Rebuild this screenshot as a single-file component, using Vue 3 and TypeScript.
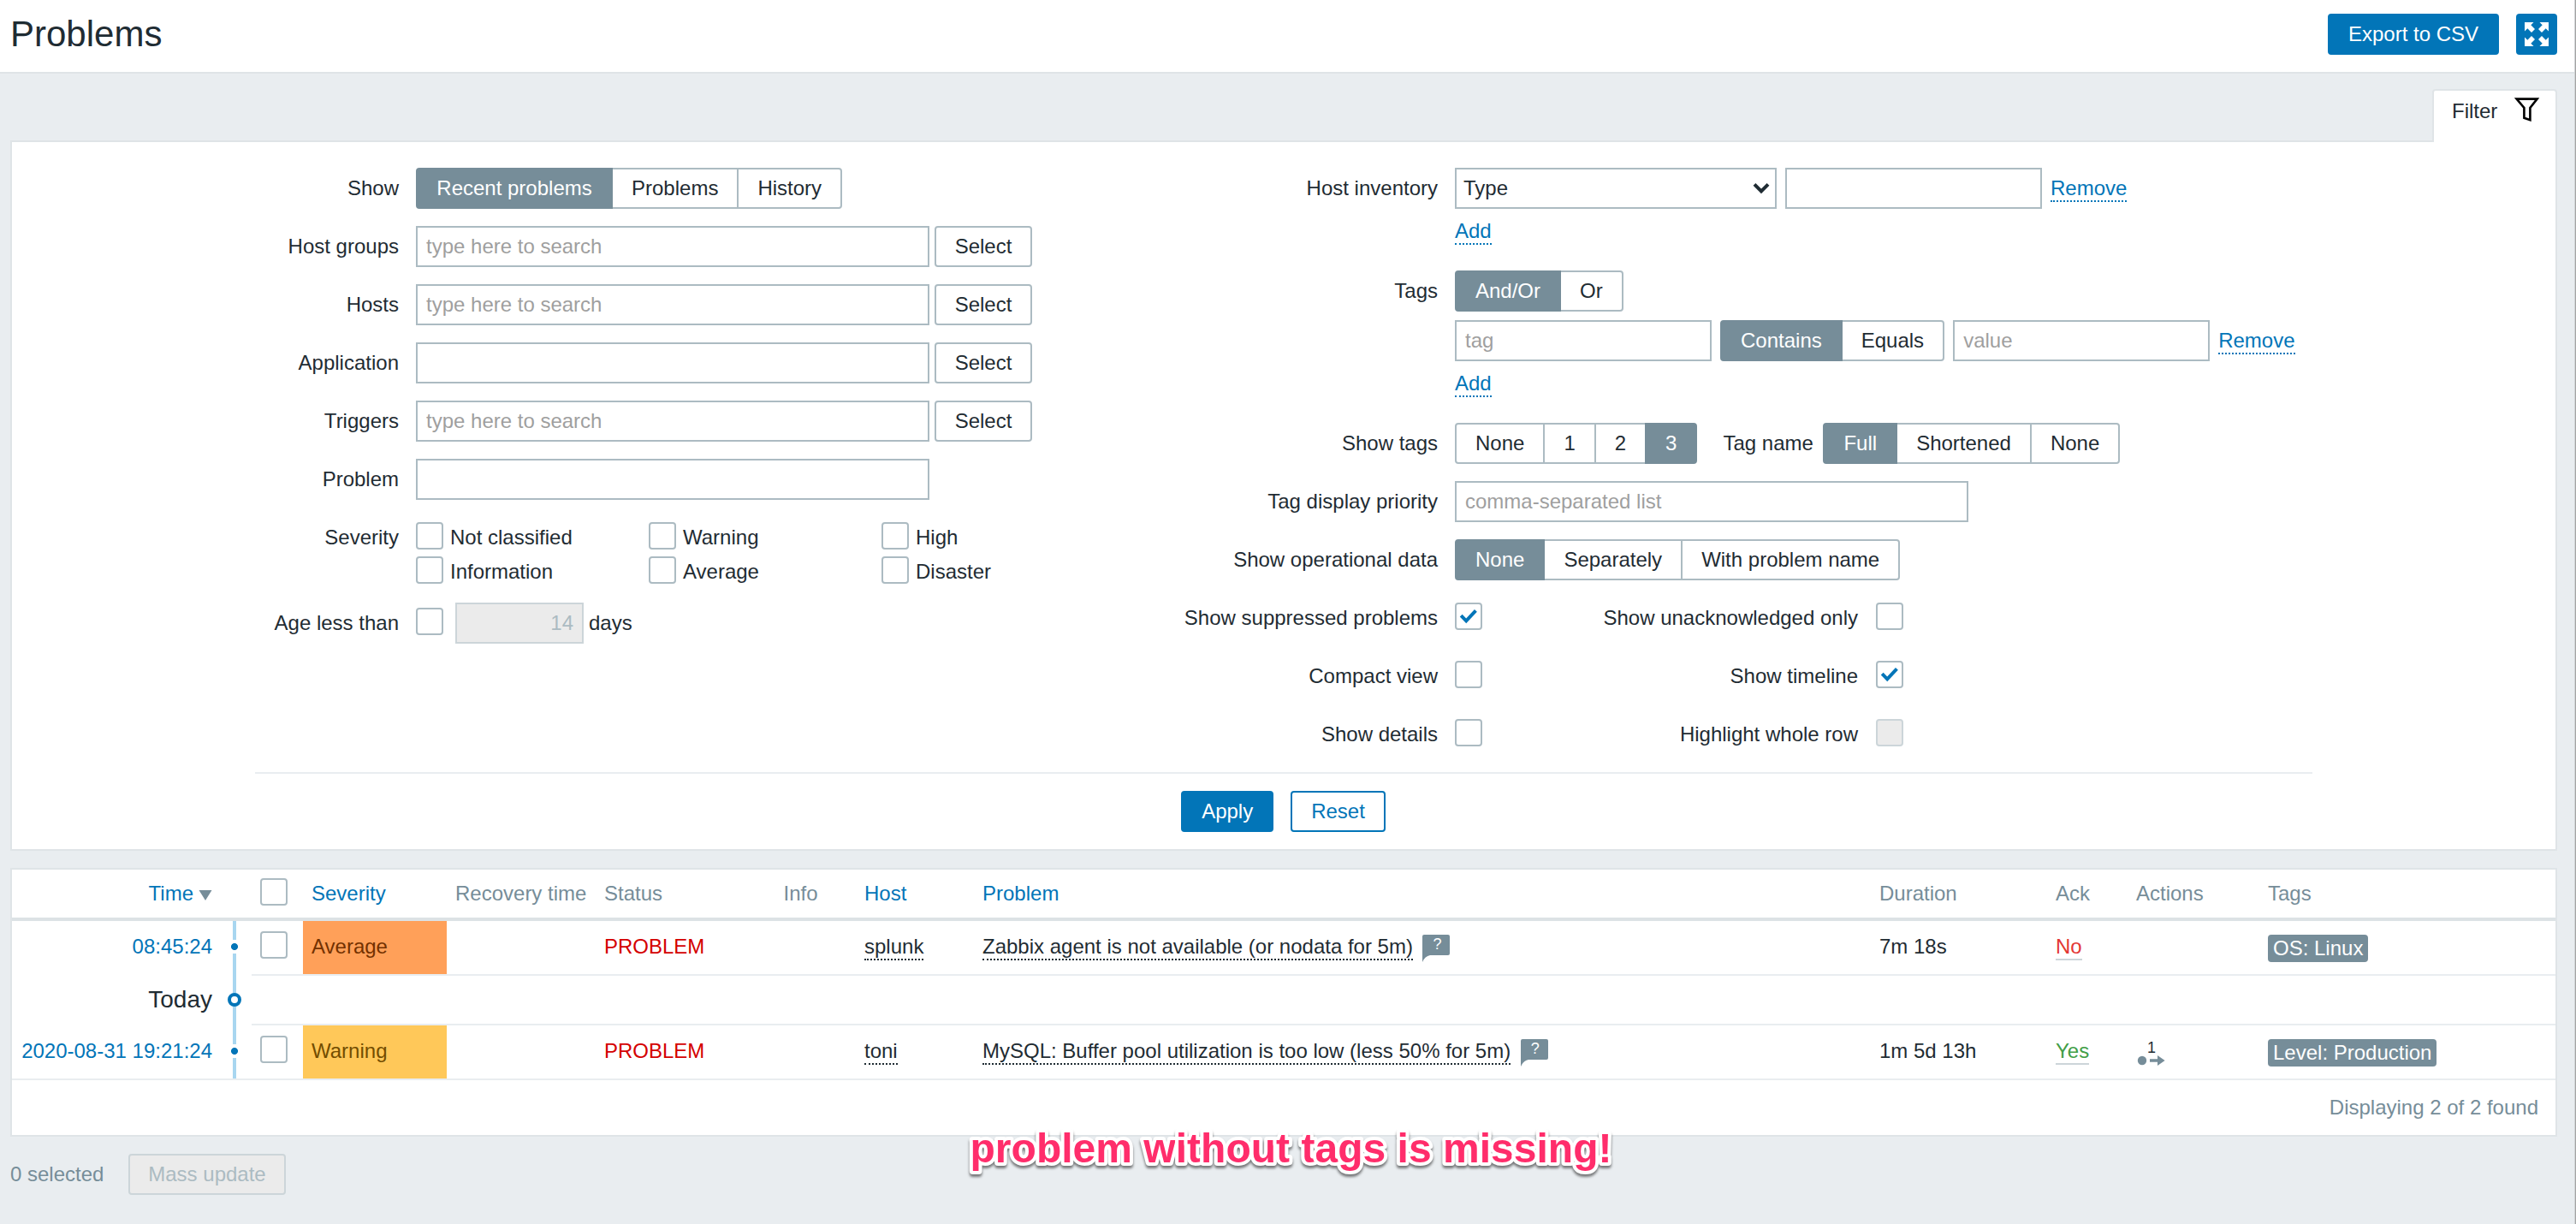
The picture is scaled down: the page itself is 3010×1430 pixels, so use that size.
<script setup lang="ts">
interface PickerField {
  label: string
  placeholder: string
  select: boolean
}

interface Problem {
  time: string
  severity: string
  level: string
  status: string
  host: string
  name: string
  duration: string
  ack: string
  actions: number
  tag: string
}

const pickers: PickerField[] = [
  { label: 'Host groups', placeholder: 'type here to search', select: true },
  { label: 'Hosts', placeholder: 'type here to search', select: true },
  { label: 'Application', placeholder: '', select: true },
  { label: 'Triggers', placeholder: 'type here to search', select: true },
  { label: 'Problem', placeholder: '', select: false },
]

const severities: string[] = ['Not classified', 'Warning', 'High', 'Information', 'Average', 'Disaster']

const toggles = [
  { left: 'Show suppressed problems', leftOn: true, right: 'Show unacknowledged only', rightOn: false, disabled: false },
  { left: 'Compact view', leftOn: false, right: 'Show timeline', rightOn: true, disabled: false },
  { left: 'Show details', leftOn: false, right: 'Highlight whole row', rightOn: false, disabled: true },
]

const first: Problem = {
  time: '08:45:24',
  severity: 'Average',
  level: 'average',
  status: 'PROBLEM',
  host: 'splunk',
  name: 'Zabbix agent is not available (or nodata for 5m)',
  duration: '7m 18s',
  ack: 'No',
  actions: 0,
  tag: 'OS: Linux',
}

const second: Problem = {
  time: '2020-08-31 19:21:24',
  severity: 'Warning',
  level: 'warning',
  status: 'PROBLEM',
  host: 'toni',
  name: 'MySQL: Buffer pool utilization is too low (less 50% for 5m)',
  duration: '1m 5d 13h',
  ack: 'Yes',
  actions: 1,
  tag: 'Level: Production',
}

const rows: (Problem | null)[] = [first, null, second]
</script>

<template>
  <div class="page">
    <header class="header">
      <h1>Problems</h1>
      <div class="header-actions">
        <button class="btn primary">Export to CSV</button>
        <button class="btn-full" aria-label="Kiosk mode">
          <svg width="28" height="28" viewBox="0 0 28 28" fill="#fff">
            <path d="M0 0H10.5L7.3 3.3L12 8L8 12L3.3 7.3L0 10.5Z" />
            <path d="M28 0H17.5L20.7 3.3L16 8L20 12L24.7 7.3L28 10.5Z" />
            <path d="M0 28H10.5L7.3 24.7L12 20L8 16L3.3 20.7L0 17.5Z" />
            <path d="M28 28H17.5L20.7 24.7L16 20L20 16L24.7 20.7L28 17.5Z" />
          </svg>
        </button>
      </div>
    </header>

    <main class="content">
      <div class="tab">
        <span>Filter</span>
        <svg width="30" height="29" viewBox="0 0 30 29" fill="none" stroke="#000" stroke-width="2.6">
          <path d="M2.6 1.6H26.6L18.4 12V26.2L11.4 23.8V12Z" />
        </svg>
      </div>

      <section class="filter">
        <div class="filter-cols">
          <div class="col left">
            <div class="row">
              <div class="label">Show</div>
              <div class="seg roomy">
                <span class="on">Recent problems</span><span>Problems</span><span>History</span>
              </div>
            </div>
            <div v-for="p in pickers" :key="p.label" class="row">
              <div class="label">{{ p.label }}</div>
              <input class="input wide" type="text" :placeholder="p.placeholder" />
              <button v-if="p.select" class="btn grey">Select</button>
            </div>
            <div class="row sev-row">
              <div class="label">Severity</div>
              <div class="sev-grid">
                <div v-for="s in severities" :key="s" class="check-item">
                  <i class="check"></i><span>{{ s }}</span>
                </div>
              </div>
            </div>
            <div class="row">
              <div class="label">Age less than</div>
              <i class="check offset"></i>
              <div class="input days">14</div>
              <span class="days-label">days</span>
            </div>
          </div>

          <div class="col right">
            <div class="row">
              <div class="label">Host inventory</div>
              <div class="stack">
                <div class="line">
                  <div class="input select">
                    <span>Type</span>
                    <svg width="20" height="14" viewBox="0 0 20 14" fill="none" stroke="#1f2c33" stroke-width="4">
                      <path d="M2 2.4L10 10.4L18 2.4" />
                    </svg>
                  </div>
                  <input class="input short" type="text" />
                  <div class="link-box"><a class="link">Remove</a></div>
                </div>
                <div class="add"><a class="link">Add</a></div>
              </div>
            </div>
            <div class="row">
              <div class="label">Tags</div>
              <div class="stack">
                <div class="seg"><span class="on">And/Or</span><span>Or</span></div>
                <div class="line tag-line">
                  <input class="input short" type="text" placeholder="tag" />
                  <div class="seg"><span class="on">Contains</span><span>Equals</span></div>
                  <input class="input short" type="text" placeholder="value" />
                  <div class="link-box"><a class="link">Remove</a></div>
                </div>
                <div class="add"><a class="link">Add</a></div>
              </div>
            </div>
            <div class="row">
              <div class="label">Show tags</div>
              <div class="seg"><span>None</span><span>1</span><span>2</span><span class="on">3</span></div>
              <div class="tag-name">Tag name</div>
              <div class="seg"><span class="on">Full</span><span>Shortened</span><span>None</span></div>
            </div>
            <div class="row">
              <div class="label">Tag display priority</div>
              <input class="input wide" type="text" placeholder="comma-separated list" />
            </div>
            <div class="row">
              <div class="label">Show operational data</div>
              <div class="seg"><span class="on">None</span><span>Separately</span><span>With problem name</span></div>
            </div>
            <div v-for="t in toggles" :key="t.left" class="row">
              <div class="label">{{ t.left }}</div>
              <i class="check offset">
                <svg v-if="t.leftOn" width="22" height="18" viewBox="0 0 22 18" fill="none" stroke="#0275b8" stroke-width="4">
                  <path d="M2.2 8.2L8.2 14.4L19.4 2.4" />
                </svg>
              </i>
              <div class="label second">{{ t.right }}</div>
              <i class="check offset" :class="{ disabled: t.disabled }">
                <svg v-if="t.rightOn" width="22" height="18" viewBox="0 0 22 18" fill="none" stroke="#0275b8" stroke-width="4">
                  <path d="M2.2 8.2L8.2 14.4L19.4 2.4" />
                </svg>
              </i>
            </div>
          </div>
        </div>
        <div class="filter-actions">
          <button class="btn primary">Apply</button>
          <button class="btn outline">Reset</button>
        </div>
      </section>

      <section class="table">
        <div class="grid thead">
          <div class="cell time sort">
            <span>Time</span>
            <svg width="16" height="12" viewBox="0 0 16 12"><path d="M0.5 0H15.5L8 12Z" fill="#768d99" /></svg>
          </div>
          <div></div>
          <div class="cell"><i class="check"></i></div>
          <div class="cell sort">Severity</div>
          <div class="cell">Recovery time</div>
          <div class="cell">Status</div>
          <div class="cell info">Info</div>
          <div class="cell sort">Host</div>
          <div class="cell sort">Problem</div>
          <div class="cell">Duration</div>
          <div class="cell">Ack</div>
          <div class="cell">Actions</div>
          <div class="cell">Tags</div>
        </div>

        <template v-for="(r, i) in rows" :key="i">
          <div v-if="r" class="grid data" :class="{ last: i === rows.length - 1 }">
            <div class="cell time axis-text"><a>{{ r.time }}</a></div>
            <div class="axis"><i class="dot"></i></div>
            <div class="cell"><i class="check"></i></div>
            <div class="cell" :class="r.level">{{ r.severity }}</div>
            <div class="cell"></div>
            <div class="cell red">{{ r.status }}</div>
            <div class="cell"></div>
            <div class="cell"><span class="dotted">{{ r.host }}</span></div>
            <div class="cell">
              <span class="dotted">{{ r.name }}</span>
              <span class="hint">
                <svg width="32" height="32" viewBox="0 0 32 32">
                  <path d="M2 0H30Q32 0 32 2V22Q32 24 30 24H9Q3 25 0 32V2Q0 0 2 0Z" fill="#768d99" />
                </svg>
                <b>?</b>
              </span>
            </div>
            <div class="cell">{{ r.duration }}</div>
            <div class="cell"><span class="ack" :class="r.ack === 'Yes' ? 'yes' : 'no'">{{ r.ack }}</span></div>
            <div class="cell">
              <span v-if="r.actions" class="act">
                <b>{{ r.actions }}</b>
                <svg width="34" height="12" viewBox="0 0 34 12" fill="#768d99">
                  <circle cx="7" cy="6" r="5.2" />
                  <path d="M16 4.2H25V0L33.6 6L25 12V7.8H16Z" />
                </svg>
              </span>
            </div>
            <div class="cell"><span class="tag">{{ r.tag }}</span></div>
          </div>
          <div v-else class="grid today">
            <div class="cell time axis-text">Today</div>
            <div class="axis"><i class="ring"></i></div>
            <div class="rest"></div>
          </div>
        </template>

        <div class="tfoot">Displaying 2 of 2 found</div>
        <svg class="note" width="780" height="72" viewBox="0 0 780 72">
          <text x="13.5" y="48" textLength="750">problem without tags is missing!</text>
        </svg>
      </section>

      <div class="bulk">
        <span>0 selected</span>
        <button class="btn off">Mass update</button>
      </div>
    </main>
  </div>
</template>

<style>
body {
  margin: 0;
  background: #ebeef0;
}
</style>

<style scoped>
.page,
.page * {
  box-sizing: border-box;
}

.page {
  width: 3010px;
  height: 1430px;
  overflow: hidden;
  background: #e9edf0;
  border-right: 1px solid #a3a3a3;
  box-shadow: inset -1px 0 #d2d5d7;
  font-family: 'Liberation Sans', Arial, sans-serif;
  font-size: 24px;
  line-height: 48px;
  color: #1f2c33;
}

.header {
  height: 86px;
  margin-right: 1px;
  padding: 16px 20px 0 12px;
  background: #fff;
  border-bottom: 2px solid #dfe4e7;
  display: flex;
  justify-content: space-between;
}

h1 {
  margin: 0;
  font-size: 42px;
  font-weight: 400;
  line-height: 48px;
}

.header-actions {
  display: flex;
  gap: 20px;
}

.btn {
  height: 48px;
  padding: 0 22px;
  border: 2px solid #acbbc2;
  border-radius: 4px;
  background: #fff;
  font: inherit;
  line-height: 44px;
  color: #1f2c33;
  white-space: nowrap;
}

.btn.primary {
  background: #0275b8;
  border-color: #0275b8;
  color: #fff;
}

.btn.outline {
  border-color: #0275b8;
  color: #0275b8;
}

.btn.off {
  width: 184px;
  padding: 0;
  background: #ebebeb;
  border-color: #ccd5d9;
  color: #acbbc2;
}

.btn.grey {
  width: 114px;
  padding: 0;
  margin-left: 6px;
}

.btn-full {
  width: 48px;
  height: 48px;
  padding: 0;
  border: 0;
  border-radius: 4px;
  background: #0275b8;
  display: flex;
  align-items: center;
  justify-content: center;
}

.content {
  width: 3000px;
  padding: 18px 12px 0;
  display: flex;
  flex-direction: column;
}

.tab {
  align-self: flex-end;
  position: relative;
  z-index: 1;
  width: 146px;
  height: 62px;
  margin-bottom: -2px;
  padding: 0 18px 0 21px;
  background: #fff;
  border: 2px solid #dfe4e7;
  border-bottom: 0;
  border-radius: 4px 4px 0 0;
  display: flex;
  justify-content: space-between;
  align-items: flex-start;
}

.tab svg {
  margin-top: 8px;
}

.filter {
  height: 830px;
  padding: 30px 284px 0;
  background: #fff;
  border: 2px solid #dfe4e7;
}

.filter-cols {
  display: flex;
  padding-bottom: 20px;
  border-bottom: 2px solid #e9edf0;
}

.col {
  display: flex;
  flex-direction: column;
  gap: 20px;
}

.col.left {
  width: 1082px;
}

.row {
  display: flex;
  align-items: flex-start;
  min-height: 48px;
}

.label {
  width: 168px;
  margin-right: 20px;
  text-align: right;
  white-space: nowrap;
  flex: none;
}

.right .label {
  width: 300px;
}

.right .label.second {
  width: 439px;
  margin-right: 21px;
}

.input {
  height: 48px;
  margin: 0;
  padding: 0 10px;
  border: 2px solid #acbbc2;
  border-radius: 0;
  background: #fff;
  font: inherit;
  line-height: 44px;
  color: #1f2c33;
  outline: 0;
}

.input::placeholder {
  color: #9f9f9f;
  opacity: 1;
}

.input.wide {
  width: 600px;
}

.input.short {
  width: 300px;
}

.input.select {
  width: 376px;
  padding: 0 6px 0 8px;
  display: flex;
  justify-content: space-between;
  align-items: center;
}

.input.days {
  width: 150px;
  margin-left: 14px;
  background: #ebebeb;
  border-color: #ccd5d9;
  color: #acbbc2;
  text-align: right;
}

.days-label {
  margin-left: 6px;
}

.seg {
  display: flex;
}

.seg span {
  height: 48px;
  padding: 0 22px;
  border: 2px solid #acbbc2;
  background: #fff;
  line-height: 44px;
  white-space: nowrap;
}

.seg.roomy span:first-child {
  padding: 0 22.3px;
}

.seg span + span {
  margin-left: -2px;
}

.seg span:first-child {
  border-radius: 4px 0 0 4px;
}

.seg span:last-child {
  border-radius: 0 4px 4px 0;
}

.seg .on {
  position: relative;
  z-index: 1;
  background: #768d99;
  border-color: #768d99;
  color: #fff;
}

.stack {
  display: flex;
  flex-direction: column;
}

.line {
  display: flex;
  gap: 10px;
}

.tag-line {
  margin-top: 10px;
}

.add {
  height: 52px;
  line-height: 52px;
}

.link {
  color: #0275b8;
  padding-bottom: 1px;
  border-bottom: 2px dotted #0275b8;
}

.tag-name {
  width: 107px;
  margin: 0 10px 0 30px;
  white-space: nowrap;
}

.check {
  flex: none;
  width: 32px;
  height: 32px;
  border: 2px solid #acbbc2;
  border-radius: 4px;
  background: #fff;
  display: flex;
  align-items: center;
  justify-content: center;
}

.check.offset {
  margin-top: 6px;
}

.check.disabled {
  background: #ebebeb;
  border-color: #ccd5d9;
}

.sev-row {
  height: 80px;
}

.sev-grid {
  display: grid;
  grid-template-columns: repeat(3, 272px);
  grid-auto-rows: 32px;
  row-gap: 8px;
  margin-top: 6px;
}

.check-item {
  display: flex;
  align-items: flex-start;
  gap: 8px;
  line-height: 36px;
}

.filter-actions {
  display: flex;
  justify-content: center;
  gap: 20px;
  padding: 20px 1px 0 0;
}

.table {
  position: relative;
  height: 314px;
  margin-top: 20px;
  background: #fff;
  border: 2px solid #dfe4e7;
}

.grid {
  display: grid;
  grid-template-columns: 244px 36px 60px 168px 174px 208px 96px 138px 1048px 206px 94px 154px 346px;
}

.cell {
  display: flex;
  align-items: center;
  padding: 0 10px;
  white-space: nowrap;
}

.thead {
  height: 60px;
  border-bottom: 4px solid #dce2e5;
  color: #768d99;
}

.thead .check {
  margin-top: -4px;
}

.thead .info {
  padding-left: 11.5px;
}

.sort {
  color: #0275b8;
}

.time {
  justify-content: flex-end;
}

.time svg {
  margin: 3px 0 0 6px;
}

.time a {
  color: #0275b8;
}

.data {
  height: 64px;
}

.data .cell {
  height: 64px;
  padding-bottom: 3px;
  border-bottom: 2px solid #e9edf0;
}

.data .axis-text,
.today .axis-text {
  border-bottom: 0;
}

.data .axis-text {
  padding-bottom: 5px;
}

.last {
  border-bottom: 2px solid #e9edf0;
}

.last .cell {
  height: 62px;
  border-bottom: 0;
}

.last .axis-text {
  padding-bottom: 3px;
}

.data .check {
  margin-bottom: 3px;
}

.axis {
  position: relative;
  background: linear-gradient(#a8d6f0, #a8d6f0) 14px 0 / 4px 100% no-repeat;
}

.dot {
  position: absolute;
  left: 8px;
  top: 22px;
  width: 16px;
  height: 16px;
  background: radial-gradient(circle, #0275b8 3.6px, #fff 4.4px);
}

.ring {
  position: absolute;
  left: 8px;
  top: 20px;
  width: 16px;
  height: 16px;
  border: 4px solid #0275b8;
  border-radius: 50%;
  background: #fff;
}

.today {
  height: 58px;
}

.today .axis-text {
  height: 56px;
  font-size: 28px;
}

.rest {
  grid-column: 3 / -1;
  border-bottom: 2px solid #e9edf0;
}

.data .average {
  background: #ffa059;
  background-clip: padding-box;
  color: #733100;
}

.data .warning {
  background: #ffc859;
  color: #734d00;
}

.red {
  color: #d40000;
}

.dotted {
  line-height: 27px;
  height: 30px;
  margin-top: 3px;
  border-bottom: 2px dotted #1f2c33;
}

.hint {
  position: relative;
  width: 32px;
  height: 32px;
  margin: 5px 0 0 11.5px;
}

.hint svg {
  display: block;
}

.hint b {
  position: absolute;
  left: 0;
  top: 0;
  width: 34px;
  text-align: center;
  font-size: 18px;
  font-weight: 400;
  line-height: 23px;
  color: #fff;
}

.ack {
  height: 30px;
  line-height: 27px;
  margin-top: 3px;
  border-bottom: 2px solid #ccd5d9;
}

.no {
  color: #e33734;
}

.yes {
  color: #429e47;
}

.act {
  display: flex;
  flex-direction: column;
  width: 34px;
  margin-top: 5px;
}

.act b {
  font-size: 18px;
  font-weight: 400;
  line-height: 18px;
  padding-left: 13px;
}

.tag {
  height: 32px;
  margin-top: 5px;
  padding: 0 6px;
  border-radius: 4px;
  background: #768d99;
  color: #fff;
  line-height: 31px;
}

.tfoot {
  height: 64px;
  padding-right: 20px;
  line-height: 64px;
  text-align: right;
  color: #768d99;
}

.note {
  position: absolute;
  left: 1106px;
  top: 294px;
  overflow: visible;
  filter: drop-shadow(0 3px 1.5px rgba(0, 0, 0, 0.5));
}

.note text {
  font-size: 48px;
  font-weight: 700;
  fill: #ff2d6b;
  stroke: #fff;
  stroke-width: 8px;
  stroke-linejoin: round;
  paint-order: stroke fill;
}

.bulk {
  display: flex;
  gap: 28.6px;
  padding-top: 20px;
  color: #768d99;
}
</style>
